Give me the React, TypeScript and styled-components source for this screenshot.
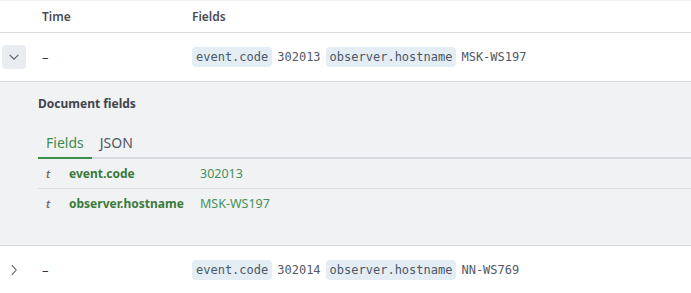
import { Fragment, useState } from 'react';
import styled, { createGlobalStyle } from 'styled-components';

const GlobalStyle = createGlobalStyle`
  html, body {
    margin: 0;
    padding: 0;
    background: #ffffff;
  }
  body {
    font-family: 'Noto Sans', 'Open Sans', sans-serif;
    color: #343741;
    -webkit-font-smoothing: antialiased;
  }
`;

const Table = styled.div`
  width: 691px;
  border-top: 1px solid #eef0f3;
`;

const Row = styled.div<{ $height: number }>`
  display: grid;
  grid-template-columns: 36px 150px 1fr;
  align-items: center;
  height: ${(p) => p.$height}px;
  border-bottom: 1px solid #d6d9de;
  background: #ffffff;
`;

const HeadCell = styled.div`
  padding-left: 6px;
  font-size: 12px;
  font-weight: 600;
  color: #4a4d55;
`;

const Cell = styled.div`
  padding-left: 6px;
  display: flex;
  align-items: center;
  gap: 5px;
  font-size: 13px;
  color: #343741;
`;

const ToggleCell = styled.div`
  padding-left: 2px;
  display: flex;
  align-items: center;
`;

const ToggleButton = styled.button<{ $open: boolean }>`
  width: 24px;
  height: 24px;
  border: none;
  border-radius: 4px;
  padding: 0;
  display: flex;
  align-items: center;
  justify-content: center;
  background: ${(p) => (p.$open ? '#e9ecf0' : 'transparent')};
  color: #5a5e66;
  cursor: pointer;
`;

const Badge = styled.span`
  font-family: 'DejaVu Sans Mono', 'Liberation Mono', monospace;
  font-size: 12px;
  line-height: 20px;
  padding: 0 4px;
  border-radius: 4px;
  background: #e4edf4;
  color: #4c5866;
`;

const Value = styled.span`
  font-family: 'DejaVu Sans Mono', 'Liberation Mono', monospace;
  font-size: 12px;
  color: #535966;
`;

const Details = styled.div`
  background: #f1f2f4;
  border-bottom: 1px solid #d6d9de;
  padding: 13px 0 26px 38px;
  height: 124px;
`;

const DetailsTitle = styled.div`
  font-size: 12px;
  font-weight: 700;
  color: #41444b;
  margin-bottom: 21px;
`;

const TabBar = styled.div`
  display: flex;
  border-bottom: 2px solid #d6d9de;
`;

const Tab = styled.button<{ $active: boolean }>`
  font-family: 'Noto Sans', 'Open Sans', sans-serif;
  font-size: 14px;
  background: none;
  border: none;
  padding: 0 8px 5px;
  margin-bottom: -2px;
  cursor: pointer;
  color: ${(p) => (p.$active ? '#3d8b4f' : '#52555c')};
  border-bottom: 2px solid ${(p) => (p.$active ? '#3e8e4b' : 'transparent')};
`;

const FieldRow = styled.div`
  display: grid;
  grid-template-columns: 23px 131px 1fr;
  align-items: center;
  height: 29px;
  padding-left: 8px;
  border-bottom: 1px solid #d9dce1;
  &:last-child {
    border-bottom: none;
  }
`;

const TypeMark = styled.span`
  font-size: 11px;
  font-style: italic;
  font-weight: 600;
  color: #6a6d74;
`;

const FieldName = styled.span`
  font-size: 12px;
  font-weight: 700;
  color: #3a7a3c;
`;

const FieldValue = styled.span`
  font-size: 12.5px;
  color: #45905c;
`;

const Chevron = ({ open }: { open: boolean }) => (
  <svg width="14" height="14" viewBox="0 0 16 16" fill="none" stroke="currentColor" strokeWidth="1.2">
    {open ? <path d="M3 5.5 8 10.5 13 5.5" /> : <path d="M5.5 2.5 10.5 8 5.5 13.5" />}
  </svg>
);

const events = [
  { code: '302013', host: 'MSK-WS197' },
  { code: '302014', host: 'NN-WS769' },
];

const App = () => {
  const [openRow, setOpenRow] = useState<number | null>(0);
  const [tab, setTab] = useState('fields');

  return (
    <>
      <GlobalStyle />
      <Table>
        <Row $height={31}>
          <div />
          <HeadCell>Time</HeadCell>
          <HeadCell>Fields</HeadCell>
        </Row>
        {events.map((ev, i) => (
          <Fragment key={ev.code}>
            <Row $height={i === 0 ? 48 : 48}>
              <ToggleCell>
                <ToggleButton $open={openRow === i} onClick={() => setOpenRow(openRow === i ? null : i)}>
                  <Chevron open={openRow === i} />
                </ToggleButton>
              </ToggleCell>
              <Cell>–</Cell>
              <Cell>
                <Badge>event.code</Badge>
                <Value>{ev.code}</Value>
                <Badge>observer.hostname</Badge>
                <Value>{ev.host}</Value>
              </Cell>
            </Row>
            {openRow === i && (
              <Details>
                <DetailsTitle>Document fields</DetailsTitle>
                <TabBar>
                  <Tab $active={tab === 'fields'} onClick={() => setTab('fields')}>Fields</Tab>
                  <Tab $active={tab === 'json'} onClick={() => setTab('json')}>JSON</Tab>
                </TabBar>
                <FieldRow>
                  <TypeMark>t</TypeMark>
                  <FieldName>event.code</FieldName>
                  <FieldValue>{ev.code}</FieldValue>
                </FieldRow>
                <FieldRow>
                  <TypeMark>t</TypeMark>
                  <FieldName>observer.hostname</FieldName>
                  <FieldValue>{ev.host}</FieldValue>
                </FieldRow>
              </Details>
            )}
          </Fragment>
        ))}
      </Table>
    </>
  );
};

export default App;
